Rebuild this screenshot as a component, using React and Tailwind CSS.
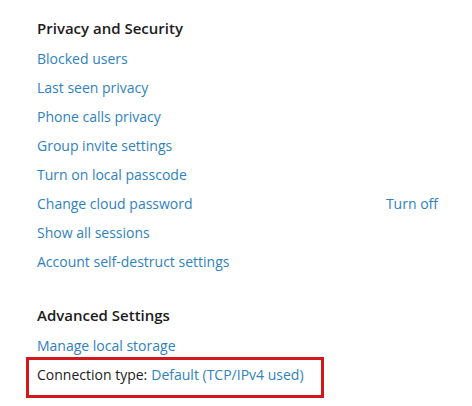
import React from 'react';

const privacyLinks = [
  { label: 'Blocked users' },
  { label: 'Last seen privacy' },
  { label: 'Phone calls privacy' },
  { label: 'Group invite settings' },
  { label: 'Turn on local passcode' },
  { label: 'Change cloud password', action: 'Turn off' },
  { label: 'Show all sessions' },
  { label: 'Account self-destruct settings' },
];

const SectionTitle = ({ children, className = '' }) => (
  <div className={`h-[30px] flex items-center text-[15px] font-semibold text-[#1c1c1c] ${className}`}>
    {children}
  </div>
);

const LinkRow = ({ label, action }) => (
  <div className="h-[29px] flex items-center justify-between">
    <a href="#" className="text-[#2f82c0]">{label}</a>
    {action && <a href="#" className="text-[#2f82c0]">{action}</a>}
  </div>
);

export default function App() {
  return (
    <div
      className="w-[472px] h-[406px] bg-white pl-[37px] pr-[34px] pt-[13px] text-[14px] antialiased"
      style={{ fontFamily: '"Open Sans", "Noto Sans", sans-serif' }}
    >
      <SectionTitle>Privacy and Security</SectionTitle>
      <div className="mt-[1px]">
        {privacyLinks.map((link) => (
          <LinkRow key={link.label} label={link.label} action={link.action} />
        ))}
      </div>

      <SectionTitle className="mt-[24px]">Advanced Settings</SectionTitle>
      <div className="mt-[1px]">
        <LinkRow label="Manage local storage" />
      </div>

      {/* highlighted row */}
      <div className="-ml-[11px] -mt-[3px] w-[298px] border-[3px] border-[#d3181c] pl-[8px] pb-[6px]">
        <div className="h-[29px] flex items-center">
          <span className="text-[#1c1c1c]">Connection type:</span>
          <a href="#" className="ml-[4px] text-[#2f82c0]">Default (TCP/IPv4 used)</a>
        </div>
      </div>
    </div>
  );
}
